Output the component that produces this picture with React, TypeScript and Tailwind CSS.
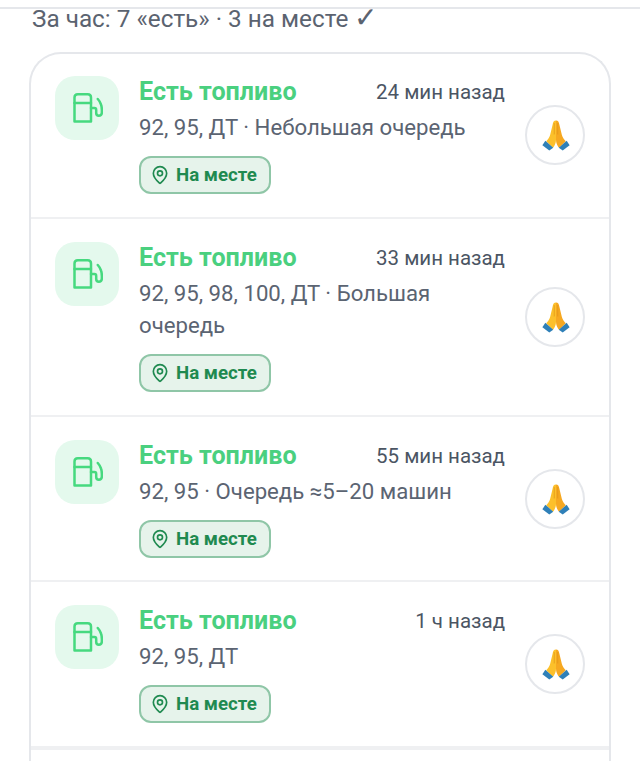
import { MapPin } from "lucide-react";

function FuelIcon() {
  return (
    <svg width="32" height="32" viewBox="0 0 32 32" fill="none" stroke="#46d97f" strokeWidth="2.5" strokeLinecap="round" strokeLinejoin="round">
      <path d="M3.5 29.5V5.5C3.5 3.5 4.8 2.2 6.8 2.2H16.7C18.7 2.2 20 3.5 20 5.5V29.5Z" />
      <path d="M3.5 11H20" />
      <path d="M20 16H23.5C24.6 16 25.2 16.8 25.2 18V21C25.2 24.5 30.5 24.5 30.8 21C31 17.5 30.8 14.5 30 12.5C29.3 10.5 28.2 8.5 26.8 7" />
    </svg>
  );
}

function Pray() {
  return (
    <svg width="29" height="31" viewBox="0 0 27 30" className="translate-x-[0.5px]">
      <path d="M13.5 0.5C11.5 0.5 10.6 2 10.2 4.5L7.8 14.5C7.2 17 5.5 19 4 20.5L10.5 27C12.5 24.5 13.5 22 13.5 19Z" fill="#fcc02b" />
      <path d="M13.5 0.5C15.5 0.5 16.4 2 16.8 4.5L19.2 14.5C19.8 17 21.5 19 23 20.5L16.5 27C14.5 24.5 13.5 22 13.5 19Z" fill="#f6a821" />
      <path d="M11.8 3V14M15.2 3V14" stroke="#d98f14" strokeWidth="0.6" fill="none" />
      <path d="M3.2 20L0.3 24.5L7 29.5L10.8 26.8Z" fill="#2f80b8" />
      <path d="M23.8 20L26.7 24.5L20 29.5L16.2 26.8Z" fill="#2f80b8" />
    </svg>
  );
}

function Row({ time, sub, pad }: { time: string; sub: string; pad: string }) {
  return (
    <div className={`flex items-center gap-5 border-b-2 border-[#eff0f2] px-6 ${pad}`}>
      <div className="flex flex-1 min-w-0 items-start gap-5">
        <div className="flex h-16 w-16 shrink-0 items-center justify-center rounded-[20px] bg-[#e4f9ed]">
          <FuelIcon />
        </div>
        <div className="flex-1 min-w-0">
          <div className="flex h-8 items-center justify-between">
            <span className="text-[25.1px] font-bold text-[#4ad07f]">Есть топливо</span>
            <span className="text-[20.5px] text-[#4b5563]">{time}</span>
          </div>
          <div className="mt-[3px] text-[22.2px] leading-8 text-[#5b6472]">{sub}</div>
          <div className="mt-[13px] inline-flex h-[38px] items-center gap-[6px] rounded-xl border-2 border-[#8fc6a7] bg-[#e6f3eb] pl-[9px] pr-3">
            <MapPin size={20} strokeWidth={2} color="#1f8a50" />
            <span className="text-[18.7px] font-bold text-[#1f8a50]">На месте</span>
          </div>
        </div>
      </div>
      <div className="flex h-[60px] w-[60px] shrink-0 items-center justify-center rounded-full border-2 border-[#e5e7eb] bg-white">
        <Pray />
      </div>
    </div>
  );
}

export default function App() {
  return (
    <div className="h-[761px] w-[640px] overflow-hidden bg-white font-[Roboto,sans-serif]">
      <div className="mt-[7px] h-[2px] bg-[#e5e7eb]" />
      <div className="-mt-[3px] h-6 pl-8 text-[24.3px] leading-6 text-[#5b6370]">
        За час: 7 «есть» · 3 на месте <span className="text-[28px] leading-6">✓</span>
      </div>
      <div className="mx-[29px] mt-[22px] overflow-hidden rounded-t-[32px] border-2 border-b-0 border-[#e5e7eb]">
        <Row pad="pt-[22px] pb-[23px]" time="24 мин назад" sub="92, 95, ДТ · Небольшая очередь" />
        <Row pad="pt-[23px] pb-[23px]" time="33 мин назад" sub="92, 95, 98, 100, ДТ · Большая очередь" />
        <Row pad="pt-[23px] pb-[22px]" time="55 мин назад" sub="92, 95 · Очередь ≈5–20 машин" />
        <Row pad="pt-[23px] pb-[23px]" time="1 ч назад" sub="92, 95, ДТ" />
        <div className="h-10 border-t-2 border-[#eff0f2]" />
      </div>
    </div>
  );
}
